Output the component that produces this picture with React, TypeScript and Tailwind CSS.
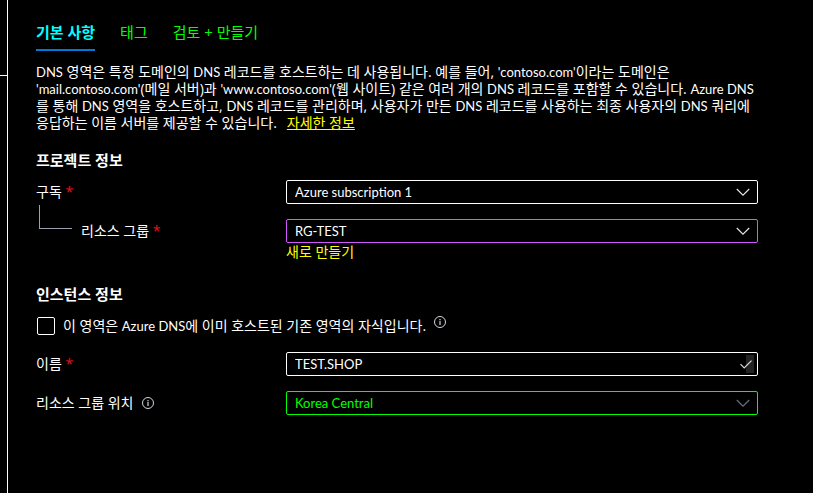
import React, { useState } from 'react';

const ChevronIcon: React.FC<{ className?: string }> = ({ className = 'text-gray-200' }) => (
    <svg
        viewBox="0 0 14 8"
        className={`pointer-events-none absolute right-2 top-2 h-2 w-3.5 ${className}`}
        fill="none"
        stroke="currentColor"
        strokeWidth="1.1"
        aria-hidden="true"
    >
        <path d="M0.8 1 7 7.2 13.2 1" />
    </svg>
);

const InfoIcon: React.FC = () => (
    <svg viewBox="0 0 12 12" className="h-3 w-3 shrink-0 text-gray-300" fill="none" stroke="currentColor" aria-hidden="true">
        <circle cx="6" cy="6" r="5.5" />
        <path d="M6 5v4" strokeWidth="1.2" />
        <path d="M6 3v1.2" strokeWidth="1.2" />
    </svg>
);

const Required: React.FC = () => <span className="text-[#e81123]"> *</span>;

// Latin words are set smaller so they sit evenly beside the Hangul
const Latin: React.FC<{ children: React.ReactNode }> = ({ children }) => (
    <span className="font-['Lato',sans-serif] text-[13px] leading-none">{children}</span>
);

interface SelectBoxProps {
    id: string;
    value: string;
    tone: string;
    iconTone?: string;
    disabled?: boolean;
}

const SelectBox: React.FC<SelectBoxProps> = ({ id, value, tone, iconTone, disabled }) => (
    <div className="relative">
        <select
            id={id}
            defaultValue={value}
            disabled={disabled}
            className={`block h-6 w-full appearance-none rounded-xs border bg-black px-2 font-['Lato',sans-serif] text-[13px] leading-5 opacity-100 ${tone}`}
        >
            <option>{value}</option>
        </select>
        <ChevronIcon className={iconTone} />
    </div>
);

const tabs = ['기본 사항', '태그', '검토 + 만들기'];

export default function App() {
    const [activeTab, setActiveTab] = useState(tabs[0]);
    const [isChild, setIsChild] = useState(false);
    const [zoneName, setZoneName] = useState('TEST.SHOP');

    return (
        <div className="flex min-h-screen bg-black font-['Open_Sans','Noto_Sans_CJK_KR',sans-serif] text-[14px] leading-[17px] text-white">
            {/* Edge of the collapsed side menu */}
            <div className="w-2 shrink-0 border-r border-white">
                <div className="h-[76px] border-b border-white" />
            </div>

            <main className="grow pb-8 pl-7 pr-[55px] pt-5">
                <div role="tablist" className="flex gap-[25px] text-[15px]">
                    {tabs.map((tab) => (
                        <button
                            key={tab}
                            role="tab"
                            aria-selected={tab === activeTab}
                            onClick={() => setActiveTab(tab)}
                            className={`h-[31px] border-b-2 pb-1 ${
                                tab === activeTab
                                    ? 'border-[#0078d4] font-bold text-[#00ffff]'
                                    : 'border-transparent text-[#00ff00]'
                            }`}
                        >
                            {tab}
                        </button>
                    ))}
                </div>

                <p className="mt-3">
                    <Latin>DNS</Latin> 영역은 특정 도메인의 <Latin>DNS</Latin> 레코드를 호스트하는 데 사용됩니다. 예를 들어, <Latin>'contoso.com'</Latin>이라는 도메인은
                    <br />
                    <Latin>'mail.contoso.com'</Latin>(메일 서버)과 <Latin>'www.contoso.com'</Latin>(웹 사이트) 같은 여러 개의 <Latin>DNS</Latin> 레코드를 포함할 수 있습니다. <Latin>Azure DNS</Latin>
                    <br />
                    를 통해 <Latin>DNS</Latin> 영역을 호스트하고, <Latin>DNS</Latin> 레코드를 관리하며, 사용자가 만든 <Latin>DNS</Latin> 레코드를 사용하는 최종 사용자의 <Latin>DNS</Latin> 쿼리에
                    <br />
                    응답하는 이름 서버를 제공할 수 있습니다.
                    <a href="#learn" className="ml-[10px] text-[#ffff00] underline">자세한 정보</a>
                </p>

                <section className="mt-[19px]">
                    <h2 className="text-[15px] font-bold leading-5">프로젝트 정보</h2>
                    <div className="mt-[10px] grid grid-cols-[250px_1fr] items-center">
                        <label htmlFor="subscription" className="pb-0.5">구독<Required /></label>
                        <SelectBox id="subscription" value="Azure subscription 1" tone="border-white text-white" />
                    </div>
                    <div className="mt-[15px] grid grid-cols-[250px_1fr]">
                        <div className="flex h-6 items-center">
                            <span className="mb-7 ml-[3px] h-6 w-[33px] shrink-0 border-b border-l border-gray-400" />
                            <label htmlFor="resource-group" className="ml-[9px] pb-0.5">리소스 그룹<Required /></label>
                        </div>
                        <div>
                            <SelectBox id="resource-group" value="RG-TEST" tone="border-[#d357fe] text-white" />
                            <a href="#new" className="block text-[#ffff00]">새로 만들기</a>
                        </div>
                    </div>
                </section>

                <section className="mt-6">
                    <h2 className="text-[15px] font-bold leading-5">인스턴스 정보</h2>
                    <div className="mt-3 flex items-center">
                        <input
                            id="child-zone"
                            type="checkbox"
                            checked={isChild}
                            onChange={(e) => setIsChild(e.target.checked)}
                            className="ml-px h-[18px] w-[18px] appearance-none rounded-xs border border-white checked:bg-white"
                        />
                        <label htmlFor="child-zone" className="mx-2 pb-0.5">
                            이 영역은 <Latin>Azure DNS</Latin>에 이미 호스트된 기존 영역의 자식입니다.
                        </label>
                        <div className="pb-2"><InfoIcon /></div>
                    </div>
                    <div className="mt-4 grid grid-cols-[250px_1fr] items-center">
                        <label htmlFor="zone-name" className="pb-0.5">이름<Required /></label>
                        <div className="relative">
                            <input
                                id="zone-name"
                                value={zoneName}
                                onChange={(e) => setZoneName(e.target.value)}
                                className="block h-6 w-full rounded-xs border border-white bg-black px-2 font-['Lato',sans-serif] text-[13px] leading-5"
                            />
                            <span className="absolute right-1 top-[3px] h-[18px] w-2 bg-[#222]" />
                            <svg viewBox="0 0 12 9" className="absolute right-[6px] top-2 h-[9px] w-3" fill="none" stroke="#ddd" strokeWidth="1.2">
                                <path d="M0.5 4.2 4.2 7.9 11.5 0.6" />
                            </svg>
                        </div>
                    </div>
                    <div className="mt-[15px] grid grid-cols-[250px_1fr] items-center">
                        <div className="flex items-center gap-[9px]">
                            <label htmlFor="location" className="pb-0.5">리소스 그룹 위치</label>
                            <InfoIcon />
                        </div>
                        <SelectBox
                            id="location"
                            value="Korea Central"
                            tone="border-[#00ff00] text-[#00ff00]"
                            iconTone="text-gray-500"
                            disabled
                        />
                    </div>
                </section>
            </main>
        </div>
    );
}
